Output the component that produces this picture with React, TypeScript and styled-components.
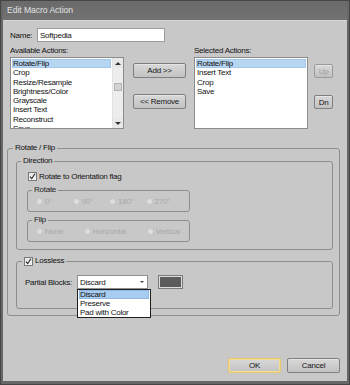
import styled, { createGlobalStyle } from "styled-components"

const GlobalStyle = createGlobalStyle`
    html, body {
        margin: 0;
        padding: 0;
        background: #5a5a5a;
    }
    body {
        font-family: "Liberation Sans", Arial, sans-serif;
        font-size: 8px;
        letter-spacing: -0.25px;
        color: #111;
    }
    * {
        box-sizing: border-box;
    }
`

const availableActions = [
    "Rotate/Flip",
    "Crop",
    "Resize/Resample",
    "Brightness/Color",
    "Grayscale",
    "Insert Text",
    "Reconstruct",
    "Save",
]
const selectedActions = ["Rotate/Flip", "Insert Text", "Crop", "Save"]

export default function App() {
    return (
        <>
            <GlobalStyle />
            <Window>
                <TitleBar>Edit Macro Action</TitleBar>
                <Body>
                    <NameRow>
                        <NameLabel>Name:</NameLabel>
                        <TextInput defaultValue="Softpedia" />
                    </NameRow>

                    <ActionsGrid>
                        <Caption>Available Actions:</Caption>
                        <span />
                        <Caption $indent={8}>Selected Actions:</Caption>
                        <span />

                        <ListBox $width={114}>
                            <ListItems>
                                {availableActions.map((a, i) => (
                                    <ListItem key={a} $selected={i === 0}>
                                        {a}
                                    </ListItem>
                                ))}
                            </ListItems>
                            <ScrollBar>
                                <ScrollArrow>
                                    <ArrowUp />
                                </ScrollArrow>
                                <ScrollTrack>
                                    <ScrollThumb />
                                </ScrollTrack>
                                <ScrollArrow>
                                    <ArrowDown />
                                </ScrollArrow>
                            </ScrollBar>
                        </ListBox>

                        <ButtonColumn $top={6} $gap={16}>
                            <Button $width={53}>Add &gt;&gt;</Button>
                            <Button $width={53}>&lt;&lt; Remove</Button>
                        </ButtonColumn>

                        <ListBox $width={114}>
                            <ListItems>
                                {selectedActions.map((a, i) => (
                                    <ListItem key={a} $selected={i === 0}>
                                        {a}
                                    </ListItem>
                                ))}
                            </ListItems>
                        </ListBox>

                        <ButtonColumn $top={7} $gap={17}>
                            <Button $width={19} $height={14} disabled>
                                Up
                            </Button>
                            <Button $width={19} $height={14}>
                                Dn
                            </Button>
                        </ButtonColumn>
                    </ActionsGrid>

                    <OuterGroup>
                        <Legend $shift={-3}>Rotate / Flip</Legend>

                        <DirectionGroup>
                            <Legend $shift={-6}>Direction</Legend>
                            <CheckRow>
                                <CheckBox />
                                <span>Rotate to Orientation flag</span>
                            </CheckRow>

                            <SubGroup $top={4}>
                                <Legend $shift={-4} $dark>
                                    Rotate
                                </Legend>
                                <RadioRow $columns="repeat(4, 36.5px)">
                                    {["0°", "90°", "180°", "270°"].map((r) => (
                                        <RadioItem key={r}>
                                            <RadioDot />
                                            {r}
                                        </RadioItem>
                                    ))}
                                </RadioRow>
                            </SubGroup>

                            <SubGroup $top={3}>
                                <Legend $shift={-4} $dark>
                                    Flip
                                </Legend>
                                <RadioRow $columns="47.5px 63px auto">
                                    {["None", "Horizontal", "Vertical"].map(
                                        (r) => (
                                            <RadioItem key={r}>
                                                <RadioDot />
                                                {r}
                                            </RadioItem>
                                        )
                                    )}
                                </RadioRow>
                            </SubGroup>
                        </DirectionGroup>

                        <LosslessGroup>
                            <Legend $shift={-3}>
                                <LegendCheck>
                                    <CheckBox />
                                    Lossless
                                </LegendCheck>
                            </Legend>
                            <PartialRow>
                                <PartialLabel>Partial Blocks:</PartialLabel>
                                <Select>
                                    <span>Discard</span>
                                    <SelectArrow />
                                    <DropList>
                                        <DropItem $selected>Discard</DropItem>
                                        <DropItem>Preserve</DropItem>
                                        <DropItem>Pad with Color</DropItem>
                                    </DropList>
                                </Select>
                                <Swatch />
                            </PartialRow>
                        </LosslessGroup>
                    </OuterGroup>

                    <Footer>
                        <Button $width={53} $height={15} $focused>
                            OK
                        </Button>
                        <Button $width={53} $height={15}>
                            Cancel
                        </Button>
                    </Footer>
                </Body>
            </Window>
        </>
    )
}

function CheckBox() {
    return (
        <CheckFrame>
            <svg width="7" height="7" viewBox="0 0 7 7">
                <path
                    d="M1 3.6 L2.7 5.6 L6 0.8"
                    fill="none"
                    stroke="#2a2a2a"
                    strokeWidth="1.1"
                />
            </svg>
        </CheckFrame>
    )
}

const Window = styled.div`
    width: 350px;
    height: 385px;
    background: #676767;
    border: 1px solid #454545;
    padding: 0 2px 3px 2px;
    display: flex;
    flex-direction: column;
`
const TitleBar = styled.div`
    height: 19px;
    display: flex;
    align-items: center;
    padding-left: 4px;
    padding-bottom: 1px;
    font-size: 8.6px;
    letter-spacing: -0.05px;
    color: #e2e2e2;
    background: linear-gradient(#6a6a6a, #727272);
`
const Body = styled.div`
    flex: 1;
    display: flex;
    flex-direction: column;
    background: #c8c8c8;
    border-top: 1px solid #d6d6d6;
    position: relative;
`
const NameRow = styled.div`
    display: flex;
    align-items: center;
    margin: 7px 0 0 7px;
    height: 14px;
`
const NameLabel = styled.span`
    width: 27px;
`
const TextInput = styled.input`
    width: 128px;
    height: 14px;
    border: 1px solid #9c9c9c;
    background: #fff;
    font: inherit;
    letter-spacing: inherit;
    color: #111;
    padding: 0 2px;
    outline: none;
`
const ActionsGrid = styled.div`
    display: grid;
    grid-template-columns: 114px 62px 122px 25px;
    grid-template-rows: 9px 72px;
    row-gap: 2px;
    margin: 4px 0 0 7px;
`
const Caption = styled.span<{ $indent?: number }>`
    line-height: 9px;
    padding-left: ${(p) => p.$indent ?? 0}px;
    white-space: nowrap;
`
const ListBox = styled.div<{ $width: number }>`
    width: ${(p) => p.$width}px;
    height: 72px;
    justify-self: end;
    display: flex;
    background: #fff;
    border: 1px solid #8c8c8c;
    overflow: hidden;
`
const ListItems = styled.div`
    flex: 1;
    padding: 1px 1px 0 1px;
`
const ListItem = styled.div<{ $selected?: boolean }>`
    height: 9.3px;
    line-height: 9.3px;
    padding-left: 1px;
    white-space: nowrap;
    background: ${(p) => (p.$selected ? "#b6d5f1" : "transparent")};
    box-shadow: ${(p) => (p.$selected ? "inset 0 0 0 1px #a3c8ea" : "none")};
`
const ScrollBar = styled.div`
    width: 11px;
    display: flex;
    flex-direction: column;
    background: #ededed;
    border-left: 1px solid #e2e2e2;
`
const ScrollArrow = styled.div`
    height: 10px;
    display: flex;
    align-items: center;
    justify-content: center;
    background: #e8e8e8;
`
const ArrowUp = styled.span`
    width: 0;
    height: 0;
    border-left: 3px solid transparent;
    border-right: 3px solid transparent;
    border-bottom: 3px solid #333;
`
const ArrowDown = styled.span`
    width: 0;
    height: 0;
    border-left: 3px solid transparent;
    border-right: 3px solid transparent;
    border-top: 3px solid #333;
`
const ScrollTrack = styled.div`
    flex: 1;
    padding: 15px 1px 0 1px;
`
const ScrollThumb = styled.div`
    height: 8px;
    background: #d2d2d2;
    border: 1px solid #b4b4b4;
`
const ButtonColumn = styled.div<{ $top: number; $gap: number }>`
    display: flex;
    flex-direction: column;
    align-items: flex-end;
    padding-top: ${(p) => p.$top}px;
    gap: ${(p) => p.$gap}px;
`
const Button = styled.button<{
    $width: number
    $height?: number
    $focused?: boolean
}>`
    width: ${(p) => p.$width}px;
    height: ${(p) => p.$height ?? 15}px;
    padding: 0;
    font: inherit;
    letter-spacing: inherit;
    color: #151515;
    border: 1px solid ${(p) => (p.$focused ? "#e9c96a" : "#7f7f7f")};
    border-radius: 2px;
    background: linear-gradient(#d8d8d8, #c2c2c2);
    box-shadow: ${(p) =>
        p.$focused
            ? "inset 0 0 0 1px #f3dc94"
            : "inset 0 1px 0 rgba(255,255,255,0.35)"};

    &:disabled {
        color: #9d9d9d;
        border-color: #9a9a9a;
    }
`
const OuterGroup = styled.fieldset`
    margin: 14px 7px 0 4px;
    padding: 3px 6px 6px 8px;
    border: 1px solid #8e8e8e;
    border-radius: 3px;
    min-width: 0;
`
const Legend = styled.legend<{ $shift: number; $dark?: boolean }>`
    padding: 0 2px;
    margin-left: ${(p) => p.$shift}px;
    line-height: 10px;
    height: 10px;
    color: ${(p) => (p.$dark ? "#262626" : "#111")};
`
const DirectionGroup = styled.fieldset`
    margin: 0;
    padding: 5px 7px 7px 10px;
    border: 1px solid #8e8e8e;
    border-radius: 3px;
    min-width: 0;
`
const CheckRow = styled.div`
    display: flex;
    align-items: center;
    gap: 2px;
    height: 10px;
    margin-left: 1px;
`
const CheckFrame = styled.span`
    width: 9px;
    height: 9px;
    display: inline-flex;
    align-items: center;
    justify-content: center;
    border: 1px solid #7a7a7a;
    background: linear-gradient(#e6e6e6, #f6f6f6);
`
const SubGroup = styled.fieldset<{ $top: number }>`
    margin: ${(p) => p.$top}px 0 0 0;
    width: 163px;
    padding: 2px 8px 5px 8px;
    border: 1px solid #8e8e8e;
    border-radius: 3px;
    min-width: 0;
`
const RadioRow = styled.div<{ $columns: string }>`
    display: grid;
    grid-template-columns: ${(p) => p.$columns};
    height: 9px;
    align-items: center;
`
const RadioItem = styled.span`
    display: flex;
    align-items: center;
    gap: 2px;
    color: #a9a9a9;
    white-space: nowrap;
`
const RadioDot = styled.span`
    width: 7px;
    height: 7px;
    border-radius: 50%;
    background: #dedede;
    border: 1px solid #c6c6c6;
`
const LosslessGroup = styled.fieldset`
    margin: 6px 0 0 0;
    padding: 9px 7px 19px 8px;
    border: 1px solid #8e8e8e;
    border-radius: 3px;
    min-width: 0;
`
const LegendCheck = styled.span`
    display: flex;
    align-items: center;
    gap: 2px;
    height: 10px;
`
const PartialRow = styled.div`
    display: flex;
    align-items: center;
    height: 14px;
`
const PartialLabel = styled.span`
    width: 52px;
    white-space: nowrap;
`
const Select = styled.div`
    position: relative;
    width: 71px;
    height: 14px;
    display: flex;
    align-items: center;
    justify-content: space-between;
    padding: 0 3px 0 2px;
    background: #fff;
    border: 1px solid #8e8e8e;
`
const SelectArrow = styled.span`
    width: 0;
    height: 0;
    border-left: 2px solid transparent;
    border-right: 2px solid transparent;
    border-top: 2px solid #444;
`
const DropList = styled.div`
    position: absolute;
    top: 13px;
    left: -1px;
    width: 74px;
    padding: 0 1px;
    background: #fff;
    border: 1px solid #1e1e1e;
    z-index: 2;
`
const DropItem = styled.div<{ $selected?: boolean }>`
    height: 9px;
    line-height: 9px;
    padding-left: 1px;
    white-space: nowrap;
    background: ${(p) => (p.$selected ? "#a9cdf0" : "transparent")};
    box-shadow: ${(p) => (p.$selected ? "inset 0 0 0 1px #8fb9e4" : "none")};
`
const Swatch = styled.span`
    width: 25px;
    height: 14px;
    margin-left: 10px;
    background: #5c5c5c;
    border: 1px solid #7b7b7b;
    box-shadow: inset 0 0 0 1px #dcdcdc;
`
const Footer = styled.div`
    margin-top: auto;
    display: flex;
    justify-content: flex-end;
    gap: 6px;
    padding: 0 7px 8px 0;
`
